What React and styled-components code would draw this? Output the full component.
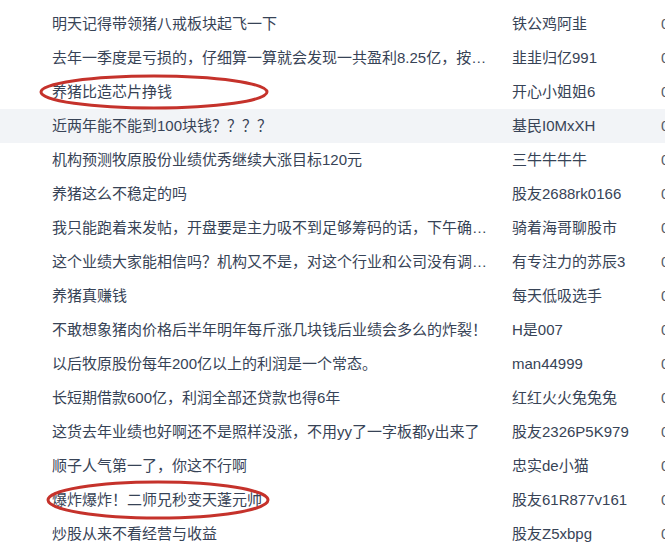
import React from "react";
import styled, { createGlobalStyle } from "styled-components";

const posts = [
    { title: "明天记得带领猪八戒板块起飞一下", author: "铁公鸡阿韭", time: "04-15 10:21" },
    { title: "去年一季度是亏损的，仔细算一算就会发现一共盈利8.25亿，按照现在的股价来看还是很便宜的", author: "韭韭归亿991", time: "04-15 10:18" },
    { title: "养猪比造芯片挣钱", author: "开心小姐姐6", time: "04-15 10:16" },
    { title: "近两年能不能到100块钱？？？？", author: "基民I0MxXH", time: "04-15 10:15", active: true },
    { title: "机构预测牧原股份业绩优秀继续大涨目标120元", author: "三牛牛牛牛", time: "04-15 10:12" },
    { title: "养猪这么不稳定的吗", author: "股友2688rk0166", time: "04-15 10:11" },
    { title: "我只能跑着来发帖，开盘要是主力吸不到足够筹码的话，下午确定会拉升的吧", author: "骑着海哥聊股市", time: "04-15 10:09" },
    { title: "这个业绩大家能相信吗？机构又不是，对这个行业和公司没有调研过吗", author: "有专注力的苏辰3", time: "04-15 10:08" },
    { title: "养猪真赚钱", author: "每天低吸选手", time: "04-15 10:05" },
    { title: "不敢想象猪肉价格后半年明年每斤涨几块钱后业绩会多么的炸裂！", author: "H是007", time: "04-15 10:03" },
    { title: "以后牧原股份每年200亿以上的利润是一个常态。", author: "man44999", time: "04-15 10:01" },
    { title: "长短期借款600亿，利润全部还贷款也得6年", author: "红红火火兔兔兔", time: "04-15 09:58" },
    { title: "这货去年业绩也好啊还不是照样没涨，不用yy了一字板都y出来了", author: "股友2326P5K979", time: "04-15 09:56" },
    { title: "顺子人气第一了，你这不行啊", author: "忠实de小猫", time: "04-15 09:55" },
    { title: "爆炸爆炸！二师兄秒变天蓬元帅", author: "股友61R877v161", time: "04-15 09:53" },
    { title: "炒股从来不看经营与收益", author: "股友Z5xbpg", time: "04-15 09:50" },
];

// hand-drawn red circles over two of the titles
const marks = [
    { cx: 154, cy: 92, rx: 113, ry: 16 },
    { cx: 158, cy: 500, rx: 110, ry: 18 },
];

function App() {
    return (
        <Page>
            <GlobalStyle />
            <List>
                {posts.map((post, index) => (
                    <Row key={index} $active={post.active}>
                        <Title>{post.title}</Title>
                        <Author>{post.author}</Author>
                        <Time>{post.time}</Time>
                    </Row>
                ))}
            </List>
            <Marks width="665" height="552" viewBox="0 0 665 552">
                {marks.map((m, i) => (
                    <ellipse
                        key={i}
                        cx={m.cx}
                        cy={m.cy}
                        rx={m.rx}
                        ry={m.ry}
                        fill="none"
                        stroke="#c5322b"
                        strokeWidth="3"
                    />
                ))}
            </Marks>
        </Page>
    );
}

export default App;

const GlobalStyle = createGlobalStyle`
    html, body {
        margin: 0;
        padding: 0;
        background: #fff;
        overflow: hidden;
    }
`;

const Page = styled.div`
    position: relative;
    width: 665px;
    height: 552px;
    overflow: hidden;
    font-family: "Liberation Sans", "Noto Sans CJK SC", sans-serif;
    font-size: 15px;
    color: #374356;
`;

const List = styled.div`
    display: flex;
    flex-direction: column;
    padding-top: 7px;
`;

const Row = styled.div`
    display: flex;
    align-items: center;
    height: 34px;
    line-height: 34px;
    padding-left: 52px;
    background: ${props => (props.$active ? "#f2f4f7" : "transparent")};
    white-space: nowrap;
`;

const Title = styled.div`
    width: 440px;
    flex-shrink: 0;
    overflow: hidden;
    text-overflow: ellipsis;
`;

const Author = styled.div`
    width: 149px;
    margin-left: 20px;
    flex-shrink: 0;
    overflow: hidden;
    text-overflow: ellipsis;
`;

const Time = styled.div`
    flex-shrink: 0;
    color: #555d68;
`;

const Marks = styled.svg`
    position: absolute;
    top: 0;
    left: 0;
    pointer-events: none;
`;
